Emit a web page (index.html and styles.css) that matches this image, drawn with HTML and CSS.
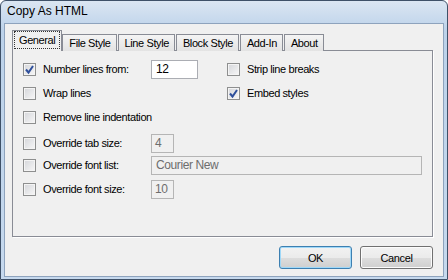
FILE: index.html
```html
<!DOCTYPE html>
<html lang="en">
<head>
    <meta charset="UTF-8">
    <title>Copy As HTML</title>
    <link rel="stylesheet" href="styles.css">
</head>
<body>
    <div class="window">
        <div class="titlebar">Copy As HTML</div>
        <div class="client">
            <div class="tabs">
                <div class="tab selected"><span class="focus">General</span></div>
                <div class="tab">File Style</div>
                <div class="tab">Line Style</div>
                <div class="tab">Block Style</div>
                <div class="tab">Add-In</div>
                <div class="tab">About</div>
            </div>

            <div class="panel">
                <label class="opt"><span class="check on"><svg width="11" height="11" viewBox="0 0 11 11"><polyline points="2,5.5 4.5,8.5 9,2" fill="none" stroke="#2e4f9b" stroke-width="2"/></svg></span>Number lines from:</label>
                <div class="field"><span class="box num">12</span></div>
                <label class="opt"><span class="check"></span>Strip line breaks</label>

                <label class="opt"><span class="check"></span>Wrap lines</label>
                <div></div>
                <label class="opt"><span class="check on"><svg width="11" height="11" viewBox="0 0 11 11"><polyline points="2,5.5 4.5,8.5 9,2" fill="none" stroke="#2e4f9b" stroke-width="2"/></svg></span>Embed styles</label>

                <label class="opt wide"><span class="check"></span>Remove line indentation</label>

                <label class="opt gap"><span class="check"></span>Override tab size:</label>
                <div class="field gap"><span class="box small off">4</span></div>
                <div class="gap"></div>

                <label class="opt"><span class="check"></span>Override font list:</label>
                <div class="field span2"><span class="box long off">Courier New</span></div>

                <label class="opt"><span class="check"></span>Override font size:</label>
                <div class="field"><span class="box small off">10</span></div>
                <div></div>
            </div>

            <div class="buttons">
                <button class="btn default">OK</button>
                <button class="btn">Cancel</button>
            </div>
        </div>
    </div>
</body>
</html>
```

FILE: styles.css
```css
body {
    margin: 0;
    background: #fff;
    font-family: "Liberation Sans", Arial, sans-serif;
    font-size: 11px;
    letter-spacing: -0.4px;
    color: #000;
}

.window {
    width: 448px;
    height: 280px;
    box-sizing: border-box;
    border: 1px solid #3f5168;
    border-radius: 6px 6px 0 0;
    padding: 0 3px 2px 3px;
    background: linear-gradient(#dbe6f2, #bcd2ea 30px, #c6d9ee);
    display: flex;
    flex-direction: column;
}

.titlebar {
    height: 22px;
    line-height: 20px;
    padding-left: 3px;
    font-size: 12px;
    letter-spacing: 0;
}

.client {
    flex: 1;
    background: #f0f0f0;
    border: 1px solid #8ea3bd;
    padding: 7px 10px 0 7px;
    display: flex;
    flex-direction: column;
}

.tabs {
    display: flex;
    align-items: flex-end;
    height: 20px;
    padding-left: 1px;
    position: relative;
    z-index: 1;
}

.tab {
    height: 17px;
    line-height: 16px;
    padding: 0 5px 0 6px;
    border: 1px solid #898c95;
    border-bottom: none;
    margin-right: 1px;
    background: linear-gradient(#f4f4f4, #e3e3e3);
    box-sizing: border-box;
}

.tab.selected {
    height: 21px;
    margin-left: -1px;
    margin-right: 0;
    padding: 1px 2px 0 2px;
    background: #f0f0f0;
}

.focus {
    display: block;
    outline: 1px dotted #333;
    padding: 0 4px;
    line-height: 16px;
}

.panel {
    height: 187px;
    box-sizing: border-box;
    border: 1px solid #898c95;
    box-shadow: 1px 1px 0 #fff;
    margin-top: -1px;
    padding: 6px 0 0 10px;
    display: grid;
    grid-template-columns: 128px 76px 1fr;
    grid-auto-rows: 24px;
    align-items: center;
}

.opt {
    display: flex;
    align-items: center;
    gap: 7px;
    white-space: nowrap;
}

.wide {
    grid-column: 1 / 4;
}

.gap {
    margin-top: 4px;
}

.span2 {
    grid-column: 2 / 4;
}

.check {
    width: 13px;
    height: 13px;
    box-sizing: border-box;
    border: 1px solid #8e8f8f;
    background: linear-gradient(135deg, #d4d6da, #f7f7f7);
    box-shadow: inset 0 0 0 1px #f4f4f4;
    display: flex;
    align-items: center;
    justify-content: center;
    flex-shrink: 0;
}

.field {
    display: flex;
    align-items: center;
}

.box {
    height: 19px;
    box-sizing: border-box;
    border: 1px solid #abadb3;
    background: #fff;
    padding: 0 4px;
    line-height: 17px;
    font-size: 12px;
}

.num {
    width: 47px;
}

.small {
    width: 23px;
    padding: 0 3px;
}

.long {
    width: 271px;
}

.off {
    background: #f0f0f0;
    border-color: #b5b5b5;
    color: #6d6d6d;
}

.buttons {
    display: flex;
    justify-content: flex-end;
    gap: 8px;
    margin-top: 9px;
}

.btn {
    width: 73px;
    height: 23px;
    font-family: "Liberation Sans", Arial, sans-serif;
    font-size: 11px;
    letter-spacing: -0.4px;
    border: 1px solid #707070;
    border-radius: 3px;
    background: linear-gradient(#f2f2f2 0%, #ebebeb 50%, #dddddd 51%, #cfcfcf 100%);
    box-shadow: inset 0 0 0 1px #fcfcfc;
    padding: 0;
}

.btn.default {
    border-color: #3c7fb1;
    box-shadow: inset 0 0 0 1px #9fd8f8;
}
```
